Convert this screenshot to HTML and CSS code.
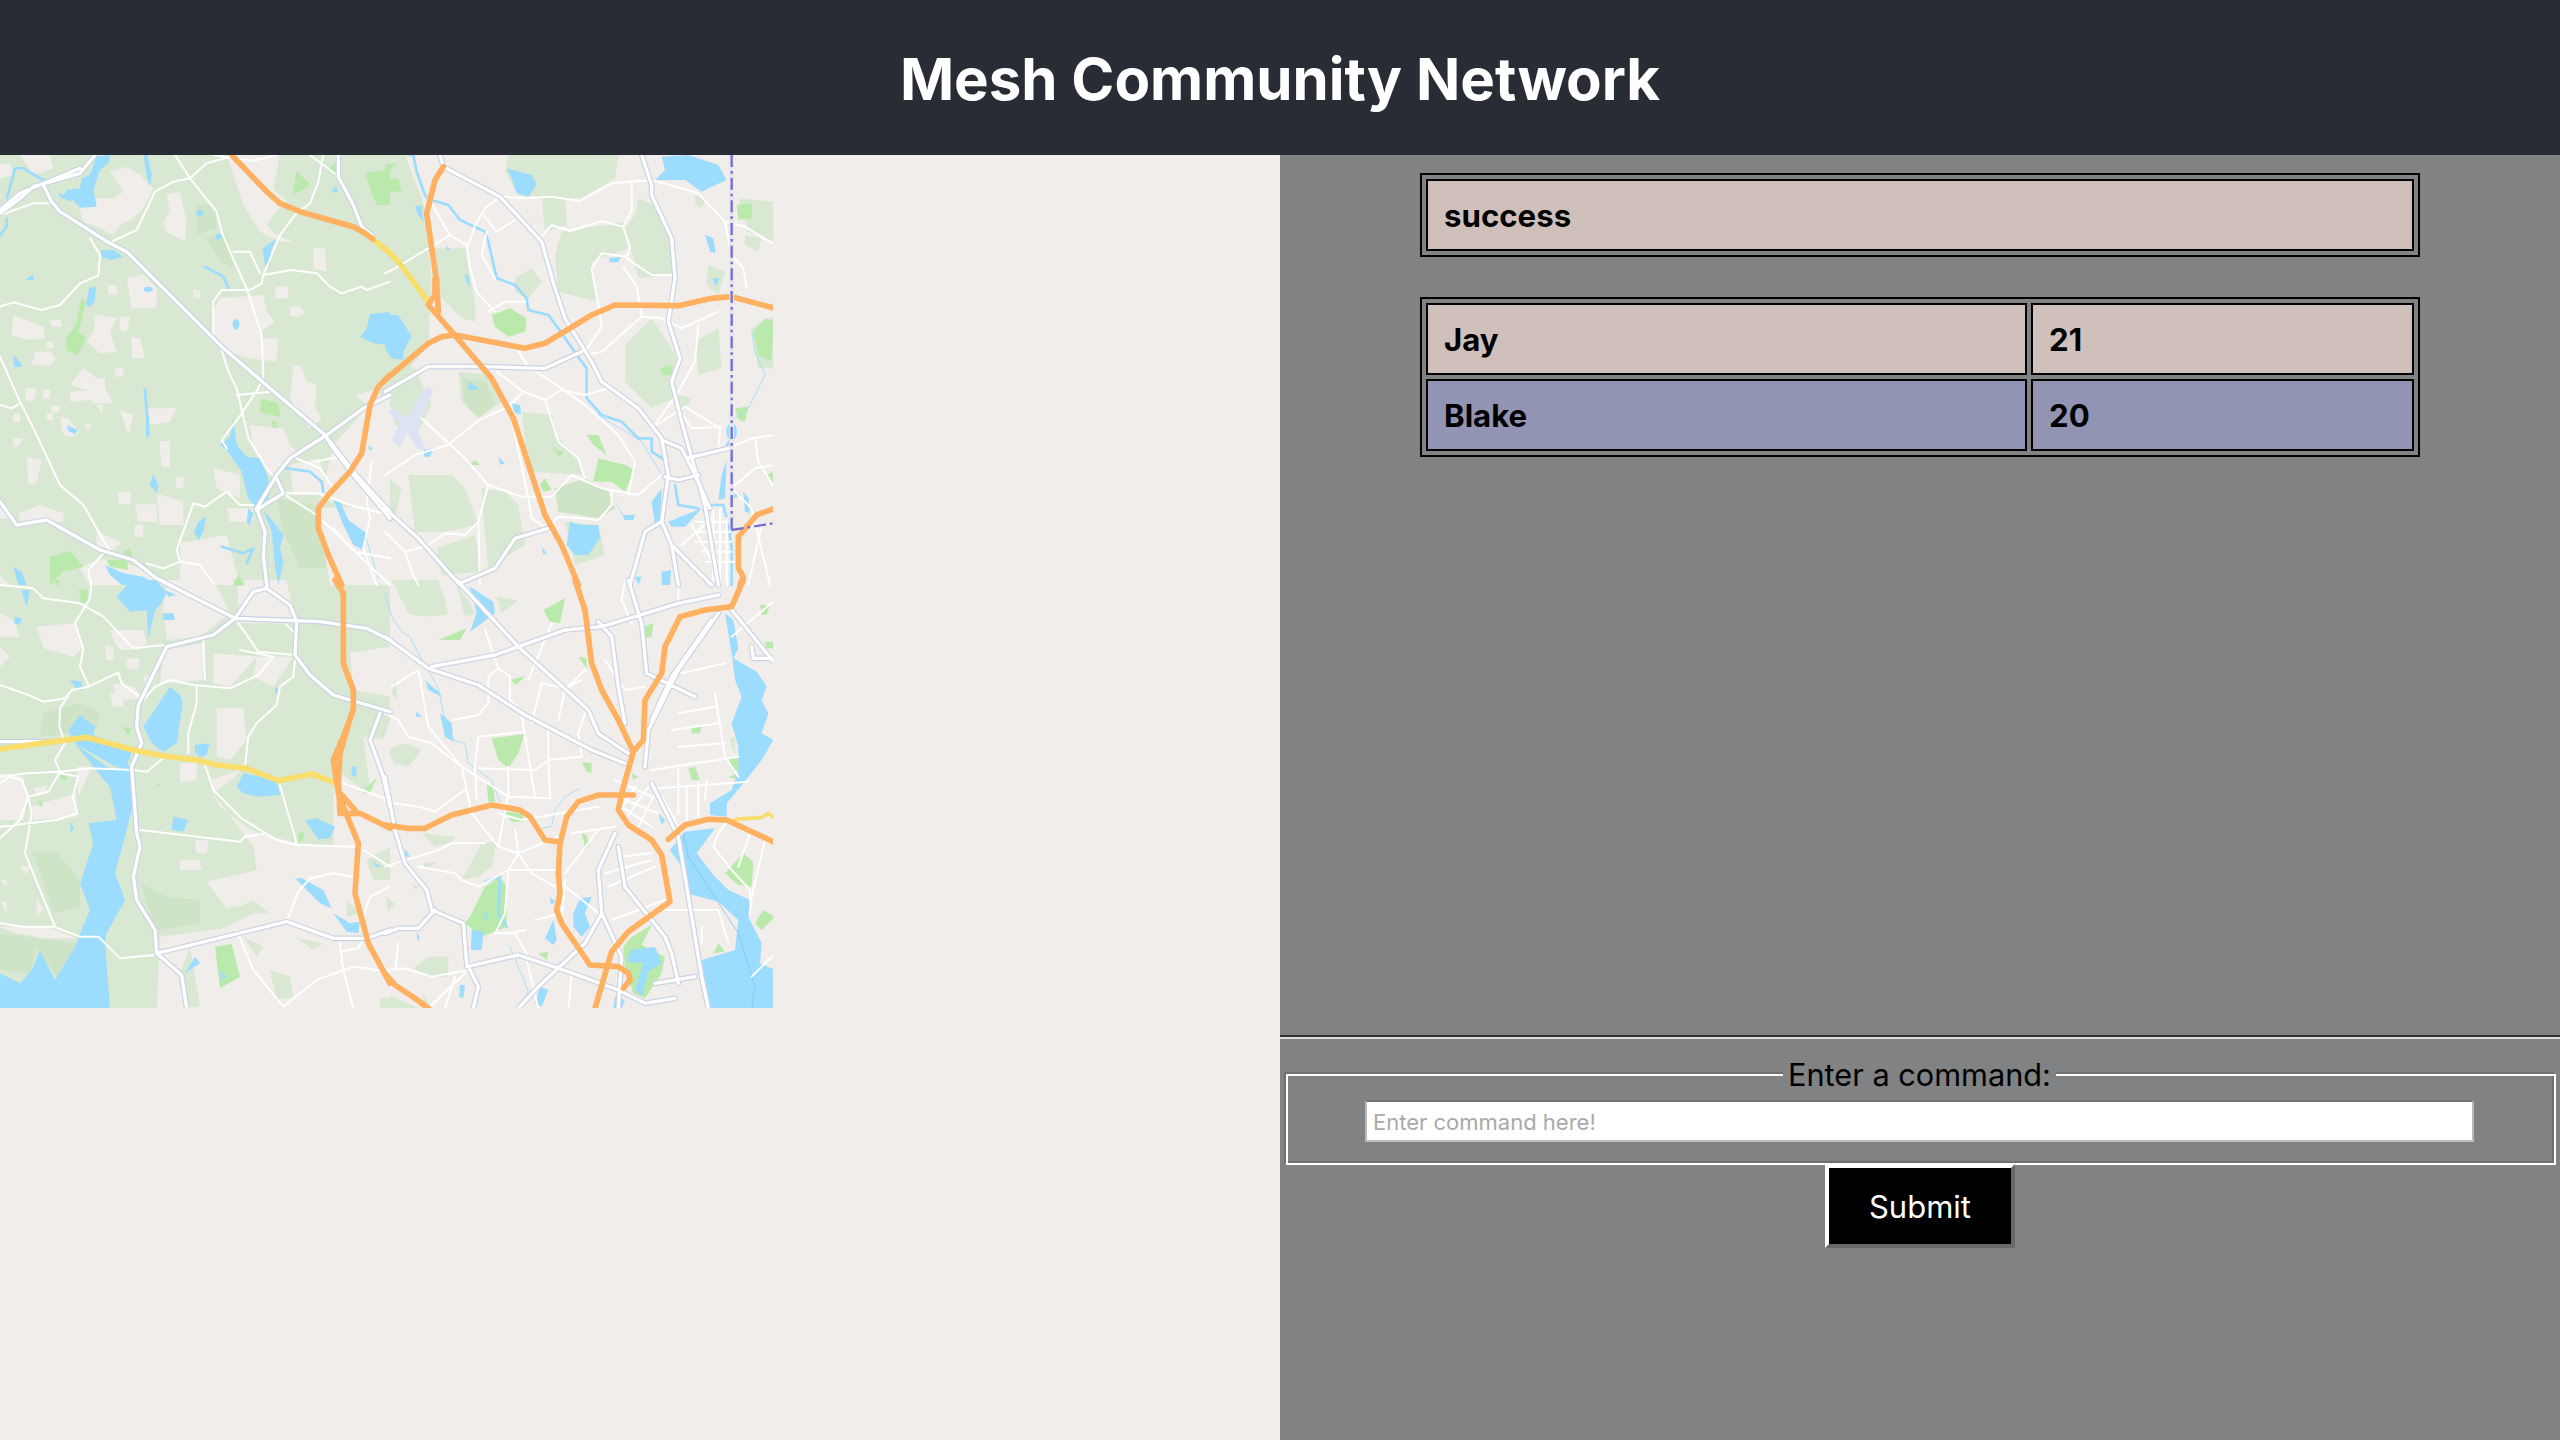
FILE: index.html
```html
<!DOCTYPE html>
<html lang="en">
<head>
    <meta charset="UTF-8">
    <title>Mesh Community Network</title>
    <link rel="stylesheet" href="styles.css">
</head>
<body>
    <header class="top">
        <h1>Mesh Community Network</h1>
    </header>
    <main class="page">
        <section class="left">
            <svg class="map" viewBox="0 0 2319 2559" aria-label="Map">
                <rect class="land" width="2319" height="2559"/>

                <!-- forest -->
                <g class="forest">
                    <path d="M0 0H1170V1290H0Z"/>
                    <g class="q2"><path d="M0 0H60L110 130 125 180 140 390 130 560 60 660 0 620ZM370 0H700L690 70 590 130 540 130 545 210 480 230 470 125 400 120 360 50ZM530 230 720 200 730 280 620 320 640 440 520 410 510 300ZM760 130 810 150 860 260 860 360 760 370 735 270 720 220 750 180ZM150 280H240L270 440 270 500 230 490 160 420ZM390 370 440 340 470 380 430 430 390 410ZM720 570 800 490 860 580 880 620 860 680 870 730 800 760 720 680ZM930 560 1000 520 1010 640 940 660ZM0 620 90 640 140 750 100 830 30 810 0 700ZM220 650 310 660 350 740 280 790 230 740ZM410 770 500 780 520 850 580 910 600 960 430 950ZM70 960H200L240 1000 280 1110 180 1130 90 1130ZM290 1000 360 1010 400 1050 420 1170 310 1240 300 1140ZM540 1100 640 1110 660 1200 570 1230ZM0 960 50 1000 30 1090 0 1100ZM155 1180 270 1140 290 1250 170 1260ZM1060 130 1170 140V260L1090 230ZM1080 240 1130 250 1120 290 1080 270ZM930 120 960 130 950 160 930 150ZM970 330 1020 350 1000 420 965 390ZM880 720 920 730 885 780ZM1100 520 1170 480V640L1120 640Z"/></g>
                    <g class="q3"><path d="M0 0H1170V420L1100 640 1000 560 1000 1000 760 1000 640 1060 480 1070 470 1285H0Z"/></g>
                    <g class="q4"><path d="M0 510 60 490 110 510 70 560 30 550ZM20 0H160L180 60 190 105 110 110 70 100ZM210 0 270 100 240 110ZM335 50 400 60 350 100ZM110 760 210 770 200 785 150 800ZM290 790 335 785 320 860 280 890 230 900ZM80 910 100 920 90 930ZM0 950 30 970 10 995ZM85 1165 130 1130H190V1190H130ZM0 1240 100 1285H10ZM115 1245 140 1285H115ZM115 850 160 845 120 870ZM30 300 40 360 20 340ZM1035 475 1050 470V525L1040 500Z"/></g>
                </g>
                <g class="forest-dark">
                    <g class="q1"><path d="M830 1030 950 1050V1130L990 1240H900L850 1130ZM590 150H640L650 220 590 240ZM620 250 680 240 700 340 660 320Z"/></g>
                    <g class="q2"><path d="M510 1000 600 970 670 1010 690 1060 640 1090 520 1070ZM230 670 300 680 330 750 280 790 240 740Z"/></g>
                    <g class="q3"><path d="M420 910 500 950 600 960V1030L470 1050ZM0 1060 230 1090 170 1190 110 1100 90 1180 0 1170ZM100 820 170 815 240 900V980L160 1000ZM130 400 240 370 300 400 290 450 120 470Z"/></g>
                </g>

                <!-- clearings -->
                <g class="clear">
                    <g class="q1"><path d="M0 30 30 25 40 60 0 70ZM60 0H150L160 40 100 60ZM330 50 380 35 420 60 460 100 430 160 400 190 360 210 340 240 300 220 250 200 240 160 290 130H340L370 110ZM500 120 540 110 560 200 555 260 500 230 490 200 510 170ZM680 0H840L820 100 860 140 820 180 800 210 830 240 880 260H840L780 230 730 150ZM40 480 130 515 135 550 90 555 35 540ZM150 495H185V515H155ZM140 560H160V580H140ZM105 590H150L168 612 150 632 95 630ZM285 478 350 490 330 530 350 590 300 595 260 560 280 530ZM360 485H390L380 530 360 525ZM395 545 420 550 435 610H395ZM380 370 430 358 470 400V460H395ZM325 390H350V420H325ZM580 405H600V430H580ZM660 430 790 420 800 470 825 500 780 530 790 550H835L830 620 750 610 680 590 640 545V470ZM940 280H975L980 350 940 340ZM825 395H865V430H825ZM870 455H900L915 475 890 485 870 480ZM880 630 905 635 920 680 950 690 945 760 965 790 930 820 900 780 870 730ZM1065 720 1140 700V760L1100 750ZM250 640 290 670H315V700L340 745H280L265 705 210 690ZM345 640H370V665H345ZM210 710 270 705 275 735 210 740ZM75 700H110L100 740 75 735ZM130 705H150V730H130ZM140 775H160V795H140ZM155 752H178V772H155ZM290 750H310L305 775ZM40 775H60V800H40ZM180 785 205 790 235 830 220 845 190 840ZM250 808H272L265 830ZM360 765 400 780 385 840ZM445 760H530L510 800 440 810ZM478 858H510V935H485ZM40 850H68L55 875H40ZM80 905 125 915 110 985 85 990ZM525 965H550V1000H530ZM355 1010H392V1048H355ZM405 1048H470V1100H415ZM470 1015 550 1040V1110H480ZM405 1110H430V1145H405ZM55 1075 120 1050 190 1075V1100H60ZM0 1040 50 1090H0ZM290 1130 365 1160 335 1190 290 1170ZM750 810 850 820 870 870 900 900 860 930 810 960 760 880ZM640 940 720 960V1030L650 1000ZM680 1060H760V1100H690ZM540 1165 680 1140 720 1290H540ZM950 1060 1170 1050V1290H990ZM1000 870 1100 760 1170 720V1070L1020 1040H960ZM870 930 960 910 980 1020H880ZM240 1240 300 1210 430 1240 500 1290H270ZM0 1260 30 1290H0Z"/></g>
                    <g class="q3"><path d="M110 140 220 130 250 200 220 230 130 205ZM0 100 40 120 60 170H0ZM330 150H430L440 190 400 210H360L340 180ZM315 195 340 200V240H320ZM380 235H420L410 270 380 265ZM340 310 400 320 430 355 350 360ZM430 285 470 290 440 340ZM650 385H730L740 480 690 540 650 530ZM500 0H640L690 100 600 170 500 180 490 80ZM710 0H860L880 100 890 130H720ZM490 210 610 190V300L480 310ZM640 220 770 230 690 320 640 310ZM770 230H880L820 320 760 290ZM1050 220 1170 200V350L1060 330ZM640 640 760 800 770 870 620 905 680 985 730 975 760 960 810 1000 860 1010H1000L1040 900V800L890 790 750 750 660 680ZM540 840H600L605 870H540ZM585 780H625L620 820H590ZM540 550H590V600L540 610ZM630 600 720 570 705 590 640 640ZM90 680 230 640V710L100 720ZM0 580 70 590 85 650 70 720H0ZM100 625 140 615V640L110 650ZM230 560H275L235 650ZM480 1070 860 1020 1170 1050V1290H570ZM0 1040H140L230 1075H130L50 1060ZM0 900H20V920ZM0 960 20 970V1000ZM60 860H90L80 885ZM110 955 130 990 110 1010ZM0 200 30 230 0 260ZM330 340H370V380H340ZM1090 470 1170 480V720L1120 700Z"/></g>
                </g>
                <g class="forest">
                    <g class="q3"><path d="M810 1170 870 1190 880 1250 830 1260ZM730 1070 790 1100 770 1130ZM890 1075 970 1090 940 1110ZM570 1100 600 1280H560L540 1180ZM380 1090 470 1100 440 1130ZM1040 960 1085 1000 1040 1010ZM1140 1255H1170V1285H1140ZM1100 840 1170 800V900L1120 900Z"/></g>
                </g>

                <!-- airport -->
                <g class="q2"><path class="airport" d="M125 695 145 705 95 825 125 885 95 880 65 830 45 880 20 855 45 805 10 770 25 760 65 790Z"/></g>

                <!-- parks -->
                <g class="park">
                    <g class="q1"><path d="M785 732 835 745 840 785 780 772ZM815 800H830V818H818ZM245 430 258 440 235 530 260 550 232 600 198 585 200 545 228 510ZM890 48 932 90 878 122ZM980 45 1010 22 1012 60ZM1095 55 1150 45 1170 30V150H1130L1110 100ZM150 1205 210 1188 250 1235 190 1250 150 1290ZM320 1215H380L385 1245 330 1235ZM700 1290 715 1260 735 1290ZM370 1190 390 1180 400 1210H375Z"/></g>
                    <g class="q2"><path d="M320 480 375 460 425 490 420 530 370 545 330 515ZM0 30 35 25 0 60ZM0 75 40 70 50 110H0ZM825 640 860 630V660H830ZM605 840H640L665 900 625 870ZM625 980 640 910 720 930 750 945 720 1010 680 980ZM465 990 480 970 500 1005 475 1010ZM500 880 535 890 525 905ZM250 930 270 915 285 930ZM1055 150 1100 145V190L1060 195ZM1050 760 1090 755 1080 800 1060 795ZM1105 530 1140 490 1165 500 1160 620 1120 600ZM1140 960 1165 950V990Z"/></g>
                    <g class="q3"><path d="M645 1100 695 1092 720 1190 660 1225ZM235 30 262 28 265 65 245 68ZM365 440 395 445 385 465ZM160 0H180L172 20ZM700 0H730L725 18H705ZM120 655 130 680 115 675ZM180 585H200V600H185ZM895 755 915 760 905 785H893ZM1095 625 1130 595 1110 640H1090ZM470 610 485 615 475 620ZM525 515 540 520H525Z"/></g>
                    <g class="q4"><path d="M320 475 418 462 400 520 370 565 340 540ZM475 90 540 55 525 130 495 125ZM160 180 245 145 225 180ZM375 300 420 288 395 315ZM255 1010 300 920 345 890 365 920V1040L290 1070 240 1030ZM910 565 930 560 945 600H920ZM920 440 950 435 945 460H920ZM1025 540 1060 530 1070 570 1045 575ZM1030 590 1060 580V600ZM1125 75H1155L1145 105H1130ZM1075 820 1105 845 1100 920 1060 915 1020 880ZM1135 990 1170 1010 1130 1050 1110 1030ZM1000 1090 1020 1115 985 1120ZM735 1075 800 1035 770 1095 840 1130 830 1180 780 1255 745 1240 720 1170 715 1100ZM775 140 805 130 800 170 780 175ZM580 230 605 235V265ZM590 545 620 550V580L605 575ZM305 615 325 620 330 665H310ZM355 695 415 700V725H380ZM590 760 605 765 612 800H600ZM740 580 760 590 745 600ZM460 1120 490 1115 485 1140ZM1140 185H1165V205H1145Z"/></g>
                </g>

                <!-- water -->
                <g class="water">
                    <g class="q1"><path d="M290 5 330 0 325 25 300 45 280 105 290 155 240 158 218 135 185 130 200 105 240 100 245 70 270 60ZM430 0H442L455 60 450 95 442 70ZM302 285H340L370 305 330 315 305 305ZM75 375 100 358V375ZM268 398 288 395 285 435 272 455 258 450ZM40 600 60 620 65 635H42ZM430 700H438L448 800V845H438V790ZM200 810 232 825 225 838 205 828ZM460 958 476 990 470 1012 448 990ZM788 280 828 252 812 290 810 335 795 330ZM1110 478 1170 470V610L1165 570 1120 565 1080 545 1100 520ZM700 790 710 870 740 905 780 910 805 970V1030L770 1060 745 1030 725 950 680 885 660 870 690 845ZM745 1060 760 1075 750 1110 740 1100ZM595 1100 618 1085 610 1130 595 1155 582 1130ZM790 1065 820 1100 850 1140 840 1180 850 1220 835 1290 825 1230 815 1130ZM1000 1035 1020 1040 1045 1095 1100 1135 1090 1185 1060 1170 1030 1110ZM315 1230 370 1255 430 1265 470 1290H365L330 1260ZM40 1235 65 1250 80 1290H55ZM1105 870 1118 880 1108 888Z"/><circle cx="600" cy="175" r="10"/><circle cx="655" cy="245" r="9"/><circle cx="1005" cy="105" r="8"/><ellipse cx="445" cy="403" rx="13" ry="8"/><ellipse cx="708" cy="508" rx="10" ry="16"/></g>
                    <g class="q2"><path d="M365 40 440 60 455 90 430 125 395 115 380 70ZM830 5 910 0 1000 30 1025 75 980 95 950 110 900 75H810L840 45ZM960 240 985 250 992 295 975 290ZM670 310 708 305 700 322H675ZM0 480H40L80 545 55 590V615L20 610 0 580ZM90 155 110 150 115 200 100 180ZM240 355 250 360 255 395 245 385ZM185 270 195 285H185ZM250 680 275 695 280 705H250ZM380 745 405 750 408 778 390 775ZM115 885 145 880 135 905H118ZM340 905 360 925 345 930ZM555 1100 590 1110H640L645 1150 610 1200H570L545 1170ZM470 1175 485 1195 475 1198ZM985 370H1005L990 395ZM680 1020 715 1080H750L745 1095H720ZM800 1040 830 1000 825 1100 810 1110ZM850 1100 950 1060 900 1115H860ZM1010 960 1025 915 1020 1030 1000 1035ZM1075 1010 1090 1030 1095 1075 1080 1070ZM1040 1015 1070 1020 1045 1030ZM830 1250 858 1245 855 1290H830ZM750 1265H770L760 1290Z"/><ellipse cx="1040" cy="830" rx="16" ry="26"/></g>
                    <g class="q3"><path d="M395 0H470L500 40 480 75 465 90 445 175 440 90 390 95 350 50ZM490 100H520L525 120H490ZM495 30 530 45 505 50ZM65 30H90L80 80 70 50ZM45 110 65 115 60 135 42 130ZM210 300 245 305 248 330H232ZM510 320 540 345 548 370 530 490 490 515 455 490 430 440 470 380ZM205 450 240 405 285 440 280 465 395 510 390 540 345 560 225 490ZM225 490 320 560 345 570 380 530 395 600V690L375 770 345 880 375 960 320 1060 315 1090 330 1285H0V1180L60 1210 95 1170 120 1110 165 1200 225 1100 240 1060 270 990 240 910 280 790 265 730 350 720 330 620 320 610ZM585 495 628 490 620 525 600 532 585 515ZM520 710 565 720 550 755 515 750ZM1055 560H1070L1068 590 1055 585ZM710 620 730 580 830 600 840 645 770 650 730 640ZM915 720 950 715 1005 740 990 775 955 778ZM885 895H905L970 930 995 985 960 970ZM1000 1000 1050 1030 1080 1025 1075 1060 1040 1055ZM555 1180 585 1130 600 1150ZM660 1170 680 1190 665 1200ZM1115 845 1145 858 1130 862ZM210 725 222 745 212 760ZM825 320 838 330 825 345Z"/></g>
                    <g class="q4"><path d="M255 20 325 65 330 100 255 155 275 100ZM120 300 165 340 170 350 130 330ZM165 400 200 430 205 485 180 470ZM1020 100 1045 120 1060 205 1045 235 1115 275 1145 320 1130 360 1150 400 1130 460 1165 480 1130 540 1075 610 1025 670V710L975 705V670L1040 630 1060 570V500L1040 430 1070 350 1050 300 1040 220ZM855 810 890 860 905 940 1000 965 1060 1020 1050 1110 950 1140 975 1285H1170V1170L1125 1150 1130 1090 1090 1010 1095 960 1030 930 985 885 935 820 990 745 900 755ZM585 955 620 950 600 1000 615 1040 590 1070 565 1040V1000ZM505 1020 515 1080 505 1095 480 1075ZM260 1050 295 1055 290 1110H258ZM300 985 310 1015 298 1020ZM495 950 510 965 498 975ZM60 805 75 830H60ZM95 395 112 410H92ZM225 1215H240L235 1255 222 1250ZM465 1220 490 1230 470 1280 450 1270ZM690 1250 720 1260 710 1285H685ZM95 1055 105 1075 97 1080ZM820 700 840 720 830 735ZM740 1110 810 1100 830 1150 790 1175 770 1250 750 1230 775 1150 725 1145Z"/></g>
                </g>
                <g class="river">
                    <g class="q1"><path d="M20 130 45 40H70L130 75M0 240 20 215V190M615 335 670 365 685 400M665 1175 730 1195 760 1180 740 1225M860 940 930 950 965 980 970 1010M180 120 210 135"/></g>
                    <g class="q2"><path d="M70 0H85L95 50 120 120 135 140M140 135 190 150 225 195 300 230 310 260 335 370 390 390 425 430 430 465 490 480 520 520 575 600 605 640V730L650 780 710 800 760 850H800V890L840 915M870 990 880 1050 940 1060M975 1050H1015L1030 1110 1040 1180V1290M1040 780V850L1020 880"/></g>
                    <g class="q4"><path d="M345 900 340 1000 365 1040M300 905 345 890"/></g>
                </g>
                <g class="river-thin">
                    <g class="q1"><path d="M1095 1140 1135 1270"/></g>
                    <g class="q2"><path d="M640 780 770 860 830 960M1100 530 1110 590 1140 660 1090 760 1050 790"/></g>
                    <g class="q4"><path d="M0 40 20 110 50 155 75 170 100 220 160 325 175 400 205 480 240 490 250 550 320 600 345 665M375 1100 430 1235 400 1285M585 625 540 650 510 690 500 740 470 745"/></g>
                    <path class="channel" transform="translate(1155 1275)" d="M895 760 910 830 1060 1060 1110 1220 1100 1285"/>
                </g>

                <!-- small roads -->
                <g class="minor">
                    <g class="q1"><path d="M0 455 40 442 125 465 180 450 240 385 295 362 300 300 270 250M0 605 60 740 105 830 180 990 250 1050 330 1190M0 750 35 760 60 745M335 260 410 225 465 110 520 80 570 70 620 25 690 5M525 0 570 70 650 170 665 230 690 290 740 400 785 540 790 660 775 700 715 790 665 855 680 880M640 550V440L665 405H750L785 385 790 360 875 345 950 355 990 395 1025 415 1085 395 1100 405 1170 380M700 290H750L780 355M790 360 840 240 885 180 930 145 955 80 970 0M665 585 685 650 710 700 745 850 800 940 825 970M710 720 810 710M530 1185 580 1045 615 1055 680 1010 720 1050H760M530 1185 540 1220 490 1240 440 1225M310 1195 265 1245 272 1290M540 1220 600 1230 640 1285M640 0 760 18 830 0M930 0 1010 60M0 180 100 145H150M840 1010 950 1080 1170 1290M850 1015H950L970 1020 1050 1050 1170 1080M890 910 960 940 1000 1000M940 920 1020 905M1115 920 1100 1040 1110 1090 1090 1180 1130 1290M1000 1120 1065 1190 1170 1210"/></g>
                    <g class="q2"><path d="M345 125 420 130 500 125 585 138 680 85 800 75 940 115 1020 200 1080 215 1170 270M345 125 300 160 270 210 250 270M295 180 335 230 390 195M465 250 500 210 555 228 650 198 715 215 735 280 725 305 650 295 620 340 640 450M715 215 740 165V85M725 310 800 360H860M715 335 755 395 770 480M130 130 195 240 245 270 255 340 275 410 330 470M0 355 40 335 195 240M305 230 290 300 330 370M310 470 360 440H420M400 590 430 635 500 680 600 750 700 840 750 920 730 1020M640 450 650 515 600 590M600 600 650 590 770 485 830 490 890 520 1000 470M940 510 930 620 880 710 810 810M0 960 90 900 190 870 275 800 370 755 415 710 480 735 530 705 600 720 670 700M110 790 240 910 310 990 410 1025H500L560 960 650 1000 760 1020 830 960M310 990 280 1100 285 1290M480 735 520 860 580 910 600 970M335 650 415 710M380 790 430 1030 440 1090 500 1130M0 1130 60 1190 130 1170 180 1135 240 1140 280 1100M60 1190 80 1250 100 1290M490 1120 520 1085 590 1090 640 1095 680 1050V1010M815 810 900 755 1005 820 1000 880M880 760 920 820 1010 815M1030 880 1100 850 1170 840M1040 1000 1110 940 1170 930M1110 850 1120 920 1170 1000M1020 200 1040 300 1075 340 1085 400M1040 1000 1100 1060 1155 1290M890 1170 980 1090M920 1110 1000 1250M930 1100H1040M930 1130H1040M930 1160H1040M950 1190H1040M960 1220H1050M985 1060V1290M1005 1060V1290M1025 1090V1290M1090 1290 1130 1110"/></g>
                    <g class="q3"><path d="M0 15 100 25 130 55 240 70 310 110 400 205 490 195M275 0 270 55 225 130 250 205 240 260 265 315M0 315 85 345 130 365 195 355 215 330 265 320 355 278 365 310 430 360M215 330 180 385 178 440 195 490 165 540 180 575M0 590 80 580 180 575 270 565 400 570 440 575 490 535M0 610 30 590 65 600 85 650 95 700 75 820 165 1040M85 650 145 635 180 575M180 580 235 590 218 650 232 700 170 720 0 740M85 650 60 720 0 775M0 1030 70 1040H160L240 1070H295L360 1135 465 1125M465 320 510 300 580 315 690 325 775 285 820 230 720 210M610 180 615 300M590 320V370L565 460V520M430 360 465 320M885 240 880 290 840 320 830 375 770 430 745 470 735 560M705 115 775 215 885 225M855 130 880 155M615 555 640 630 725 715 830 780 890 795 1065 800M420 750 720 785 735 770 790 762M835 600 885 770 890 795M1030 610 1170 660M710 1050 760 1170 850 1280M850 1280 950 1200 1060 1160 1170 1175M1020 1090 1030 1170 1060 1285M860 1025 895 935 930 895 1000 880 1060 890M1090 1010 1110 950 1170 920M1020 1115 1075 1105 1085 1085M1090 810 1170 860"/></g>
                    <g class="q4"><path d="M0 400 40 420 70 470 140 490 230 560 370 650 500 655M100 270 130 440 230 560 260 700 340 800M0 665 100 680 150 695 240 630M205 420 280 405 310 370V290L340 265 375 290V360L420 405M0 860 80 835 160 810 200 790H300M280 470 270 560 275 660M370 560V640L340 800M280 470 420 455M280 565 450 570 490 540 590 530M490 450V540L495 650M410 405 450 650M440 430 470 310 540 325 590 300M520 420 540 330 600 270M600 400 580 460 590 530M340 700 410 720 640 680M340 800 400 820 440 880 510 920M100 860 210 880 230 900 280 920 370 870H510M390 750 400 820 370 870 360 1000 330 1060H390L430 1130M400 820 520 770M530 910 640 1000M540 880 640 750M560 760 690 740M590 670 550 700M710 680 800 740M720 660 820 700M750 620 700 700M790 620 720 720M810 640 760 740M830 650 870 720M800 620 880 740M690 600 800 650M820 625 1090 605M800 570 1060 530M880 500 1020 490M860 450 1000 430M880 400 990 380M890 280 1020 250M880 570V700M905 620V720M940 610V720M965 600 960 660M990 340 1020 530 1060 590M1030 720 1000 760 985 800 1040 870 1095 930V970M1095 760 1060 860M1140 780 1100 950 1095 1000M950 1040V1090M660 880 800 840M670 920 810 860M700 830 800 820M680 1020 840 960M540 900 530 1020 570 1090M450 1020 530 1000M420 1050 370 1060M0 1170 60 1165 140 1190 250 1170M40 1090 30 1170M180 1285 210 1190M720 0 710 60 740 130M880 0V70M1040 170 1170 60M300 150 340 265M20 320 100 270M430 300 500 130M660 240 720 330 780 320M840 990H1000L1030 1090M1100 1190 1170 1120M420 1120 460 1285M560 1190 550 1285M130 1285 240 1180"/></g>
                </g>

                <!-- big grey roads, drawn twice for the edge -->
                <defs>
                    <g id="trunks">
                        <g class="q1"><path d="M0 175 60 130 100 95 240 55 285 0M0 165 60 115 240 40M130 90 155 140 180 170 330 265 380 290 640 550 665 575 810 700 975 840 1060 950 1170 1070M975 840 1000 880 1060 960 1170 1090M1170 720 1090 760 980 840 870 910 830 960 770 1060 795 1130 790 1200 800 1290M830 970 850 1015 770 1065M1015 0V65L1060 150 1085 215 1115 240M0 1040 50 1110 140 1095 300 1185 400 1215 470 1270 510 1290"/></g>
                        <g class="q2"><path d="M165 0 175 35 345 125 470 260 510 400 540 490 620 620 650 680 760 760 830 850 850 960 830 1100 860 1170 880 1290M770 0 800 90V120L860 250 870 370 850 500 885 610 860 680 890 800 960 1050 1000 1290M0 710 130 635H300L480 640 590 590M0 1060 100 1150 225 1290M225 1285 330 1240 390 1150 490 1120M830 1100 780 1130 735 1290M860 1170 980 1290M905 910 1030 880M840 965 880 975 940 960M830 855 890 880 930 960 975 1060"/></g>
                        <g class="q3"><path d="M480 0 705 115 960 125 1100 145 1170 180M705 115 760 35 800 25 870 75 890 125 885 225 930 285 1000 345 1170 395M800 0V25M705 115 640 165 500 200 415 375 410 440 425 490 395 560 410 760 420 800 400 890 410 960 465 1050 470 1120 545 1185 560 1285M470 1120 860 1025 1000 1075H1100L1170 1050M0 485H165M1140 400 1110 480 1150 590 1170 680"/></g>
                        <g class="q4"><path d="M140 260 330 225 540 150 650 140 880 70 1000 45M215 0 400 200 610 390 640 460 730 520M0 170 130 265 280 315 420 405 620 510 720 550M730 0 770 130 785 280 930 350M640 125 680 170 700 320 720 430M1000 100 880 270 790 450 780 560M980 120 860 290 800 420M800 610 880 770 950 1190 970 1285M0 590 30 750 60 850 125 930 140 990 235 1030 245 1150 280 1220 265 1285M0 1060 40 1045H100L150 990M245 1160 400 1125 550 1175 700 1230 780 1270 870 1255M400 1285 460 1220 600 1090 650 1000 640 870 690 760M650 1000 710 1130 700 1285M700 800 720 920 840 1070 860 1120 880 1210M1100 200 1105 235H1170M1040 90 1170 250M810 1210 930 1190"/></g>
                    </g>
                </defs>
                <use href="#trunks" class="trunk-edge"/>
                <use href="#trunks" class="trunk-fill"/>

                <!-- state highway -->
                <g class="yellow">
                    <g class="q1"><path d="M1118 252 1170 295"/></g>
                    <g class="q2"><path d="M0 280 40 320 130 440"/></g>
                    <g class="q3"><path d="M0 507 160 485 260 472 400 510 490 528 590 540 650 555 740 565 835 602 935 582 1005 608"/></g>
                    <g class="q4"><path class="spur" d="M1050 718 1130 712 1150 700 1165 712"/></g>
                </g>

                <!-- motorway -->
                <g class="orange">
                    <g class="q1"><path d="M695 0 800 110 840 145 900 170 1060 215 1095 235 1118 252M1170 660 1135 695 1110 750 1085 895 1050 950 985 1020 955 1060V1120L985 1200 1025 1290"/></g>
                    <g class="q2"><path d="M175 35 150 75 125 175 155 380 160 470M150 370V420L130 450M0 675 130 565 170 545 210 540 420 580 480 565 620 480 690 450 880 452 980 430 1040 425 1170 460M130 450 200 530 320 670 385 790 480 1080 530 1170 580 1290M1170 1060 1115 1080 1060 1145V1240L1075 1265 1065 1290"/></g>
                    <g class="q3"><path d="M1005 0 1030 40V250L1060 330V390L1030 470 1000 540 1015 640 1030 680 1075 790 1065 940 1105 1090 1170 1210M1055 400 1020 520 1015 600 1020 700H1080L1170 745M1020 640 1065 690"/></g>
                    <g class="q4"><path d="M570 0 600 90 620 250 650 330 700 420 745 515 710 640 700 690 730 735 800 780 830 825 855 965 730 1055 680 1115 630 1285M745 515 775 480 780 360 830 280 840 200 885 110 960 90 1040 80 1075 0M515 785 480 780 435 710 405 690 320 675 200 705 120 745H70L0 735M580 665 640 645H745M580 665 545 710 525 790 520 880 525 940 515 990 530 1030 615 1155 700 1160 730 1180 735 1200 715 1225M850 778 900 735 970 718 1025 720 1165 785M0 1180 30 1215 90 1255 130 1285"/></g>
                </g>

                <!-- state line -->
                <g class="q2">
                    <path class="line-halo" d="M1040 0V1125"/>
                    <path class="line" d="M1040 0V1125M1040 1125 1165 1105"/>
                </g>
            </svg>
        </section>
        <section class="right">
            <div class="results">
                <table class="tbl">
                    <tr class="odd"><td>success</td></tr>
                </table>
                <table class="tbl">
                    <tr class="odd"><td class="name">Jay</td><td>21</td></tr>
                    <tr class="even"><td class="name">Blake</td><td>20</td></tr>
                </table>
            </div>
            <hr class="rule">
            <form class="cmd" onsubmit="return false">
                <fieldset class="box">
                    <legend>Enter a command:</legend>
                    <input class="cmd-input" type="text" placeholder="Enter command here!">
                </fieldset>
                <button class="submit" type="submit">Submit</button>
            </form>
        </section>
    </main>
</body>
</html>
```

FILE: styles.css
```css
*{
    box-sizing: border-box;
}
body{
    margin: 0;
    height: 1440px;
    display: flex;
    flex-direction: column;
    font-family: Inter, "Liberation Sans", sans-serif;
    overflow: hidden;
}
.top{
    height: 155px;
    padding-top: 2px;
    background: #282c34;
    color: #fff;
    display: flex;
    align-items: center;
    justify-content: center;
}
.top h1{
    margin: 0;
    font-size: 58.2px;
    font-weight: 700;
}
.page{
    flex: 1;
    display: flex;
}
.left{
    width: 1280px;
    background: #f1edea;
}
.right{
    width: 1280px;
    background: #818283;
}

/* map */
.map{
    display: block;
    width: 773px;
    height: 853px;
}
.map path{
    stroke-linejoin: round;
}
.q2{ transform: translate(1155px, 0); }
.q3{ transform: translate(0, 1275px); }
.q4{ transform: translate(1155px, 1275px); }
.land{ fill: #f1edea; }
.forest{ fill: #d9e8d2; }
.forest-dark{ fill: #cfe3c6; }
.clear{ fill: #f1edea; }
.airport{ fill: #dde3f5; }
.park{ fill: #b9eaab; }
.water{ fill: #9bdcff; }
.river, .river-thin, .minor, .yellow, .orange, .trunk-edge, .trunk-fill, .line, .line-halo{
    fill: none;
    stroke-linecap: round;
}
.river{ stroke: #9bdcff; stroke-width: 8; }
.river-thin{ stroke: #9bdcff; stroke-width: 2.5; }
.channel{ stroke: #82c4f5; }
.minor{ stroke: #fff; stroke-width: 6; }
.trunk-edge{ stroke: #cbd3e3; stroke-width: 17; }
.trunk-fill{ stroke: #fff; stroke-width: 10; }
.yellow{ stroke: #f9dd6d; stroke-width: 17; }
.yellow .spur{ stroke-width: 11; }
.orange{ stroke: #ffb061; stroke-width: 17; }
.line-halo{ stroke: #e9e6f2; stroke-width: 14; }
.line{
    stroke: #7570cc;
    stroke-width: 7;
    stroke-linecap: butt;
    stroke-dasharray: 36 12 8 12;
}

/* results tables */
.results{
    height: 880px;
    padding-top: 18px;
}
.tbl{
    width: 1000px;
    margin: 0 auto 40px;
    border: 2px solid #000;
    border-spacing: 4px;
    font-size: 31.2px;
    font-weight: 700;
    line-height: 36px;
    color: #000;
}
.tbl td{
    border: 2px solid #000;
    padding: 17px 16px 15px;
}
.tbl .name{
    width: 601px;
}
.odd td{
    background: #cfc0bc;
}
.even td{
    background: #9195b3;
}

/* command form */
.rule{
    margin: 0;
    height: 4px;
    border: 0;
    border-top: 2px solid #333;
    border-bottom: 2px solid #ddd;
}
.cmd{
    padding-top: 16px;
}
.box{
    margin: 0 4px 0 6px;
    padding: 6px 3px 21px 0;
    border: 2px solid #fff;
    box-shadow: -2px -2px 0 #6e6f71, inset -2px -2px 0 #6e6f71;
}
.box legend{
    margin: 0 auto;
    padding: 0 5px;
    font-size: 30.7px;
    line-height: 39px;
    color: #000;
    background: #818283;
}
.cmd-input{
    display: block;
    width: 1109px;
    height: 42px;
    margin: 0 auto;
    padding: 2px 6px 0;
    border: 2px solid;
    border-color: #737476 #b8b8b8 #c0c0c0;
    background: #fff;
    font-family: inherit;
    font-size: 22px;
}
.cmd-input::placeholder{
    color: #a9a9a9;
}
.submit{
    display: block;
    width: 190px;
    height: 84px;
    margin: -1px auto 0;
    border: 4px solid;
    border-color: #fff #68696b #68696b #fff;
    background: #000;
    color: #fff;
    font-family: inherit;
    font-size: 31px;
}
```
